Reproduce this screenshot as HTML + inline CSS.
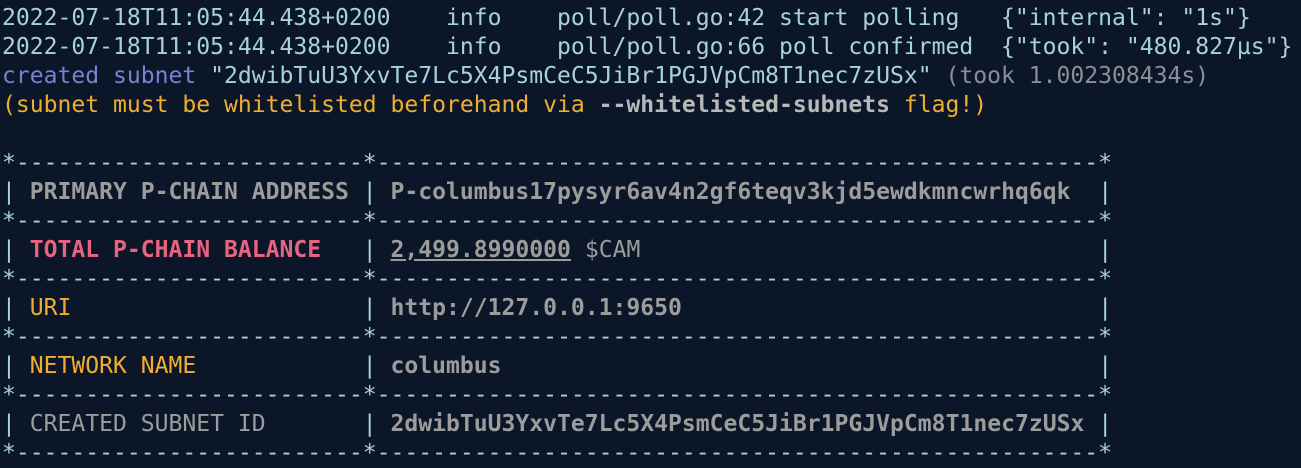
<!DOCTYPE html>
<html><head><style>
html,body{margin:0;padding:0;background:#0b1729;width:1301px;height:460px;overflow:hidden}
pre{margin:0;position:absolute;left:2px;top:-25.5px;font-family:"DejaVu Sans Mono","Liberation Mono",monospace;font-size:23.05px;line-height:29px;color:#a8d3d6;white-space:pre}
.p{color:#7c80cf}.d{color:#8a8f96}.o{color:#efae32}.b{font-weight:bold}
.g{color:#9c9c9c}.k{color:#e8637f;font-weight:bold}.u{text-decoration:underline}
</style></head><body><pre>

2022-07-18T11:05:44.438+0200    info    poll/poll.go:42 start polling   {"internal": "1s"}
2022-07-18T11:05:44.438+0200    info    poll/poll.go:66 poll confirmed  {"took": "480.827µs"}
<span class="p">created subnet</span> "2dwibTuU3YxvTe7Lc5X4PsmCeC5JiBr1PGJVpCm8T1nec7zUSx" <span class="d">(took 1.002308434s)</span>
<span class="o">(subnet must be whitelisted beforehand via <span class="b" style="color:#b8b8b8">--whitelisted-subnets</span> flag!)</span>

*-------------------------*----------------------------------------------------*
| <span class="g b">PRIMARY P-CHAIN ADDRESS</span> | <span class="g b">P-columbus17pysyr6av4n2gf6teqv3kjd5ewdkmncwrhq6qk</span>  |
*-------------------------*----------------------------------------------------*
| <span class="k">TOTAL P-CHAIN BALANCE</span>   | <span class="g b u">2,499.8990000</span> <span class="g">$CAM</span>                                 |
*-------------------------*----------------------------------------------------*
| <span class="o">URI</span>                     | <span class="g b">http://127.0.0.1:9650</span>                              |
*-------------------------*----------------------------------------------------*
| <span class="o">NETWORK NAME</span>            | <span class="g b">columbus</span>                                           |
*-------------------------*----------------------------------------------------*
| <span class="g">CREATED SUBNET ID</span>       | <span class="g b">2dwibTuU3YxvTe7Lc5X4PsmCeC5JiBr1PGJVpCm8T1nec7zUSx</span> |
*-------------------------*----------------------------------------------------*
</pre></body></html>
